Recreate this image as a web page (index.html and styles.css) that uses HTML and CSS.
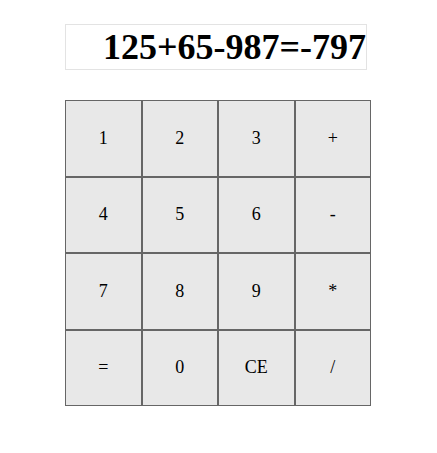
FILE: index.html
```html
<!DOCTYPE html>
<html>
<head>
<meta charset="utf-8">
<link rel="stylesheet" href="styles.css">
</head>
<body>
<div class="calc">
  <div class="display">125+65-987=-797</div>
  <div class="keys">
    <div class="key">1</div>
    <div class="key">2</div>
    <div class="key">3</div>
    <div class="key">+</div>
    <div class="key">4</div>
    <div class="key">5</div>
    <div class="key">6</div>
    <div class="key">-</div>
    <div class="key">7</div>
    <div class="key">8</div>
    <div class="key">9</div>
    <div class="key">*</div>
    <div class="key">=</div>
    <div class="key">0</div>
    <div class="key">CE</div>
    <div class="key">/</div>
  </div>
</div>
</body>
</html>
```
FILE: styles.css
```css
body {
  margin: 0;
  background: #fff;
  font-family: "Liberation Serif", "Times New Roman", serif;
}
.calc {
  padding: 24px 0 0 65px;
}
.display {
  width: 300px;
  height: 44px;
  border: 1px solid #e3e3e3;
  text-align: right;
  font-size: 36px;
  font-weight: bold;
  line-height: 44px;
  color: #000;
}
.keys {
  margin-top: 30px;
  width: 306px;
  display: grid;
  grid-template-columns: repeat(4, 76.5px);
  grid-auto-rows: 76.5px;
}
.key {
  box-sizing: border-box;
  border: 1px solid #666;
  background: #e8e8e8;
  display: flex;
  align-items: center;
  justify-content: center;
  font-size: 18px;
  color: #000;
}
```
